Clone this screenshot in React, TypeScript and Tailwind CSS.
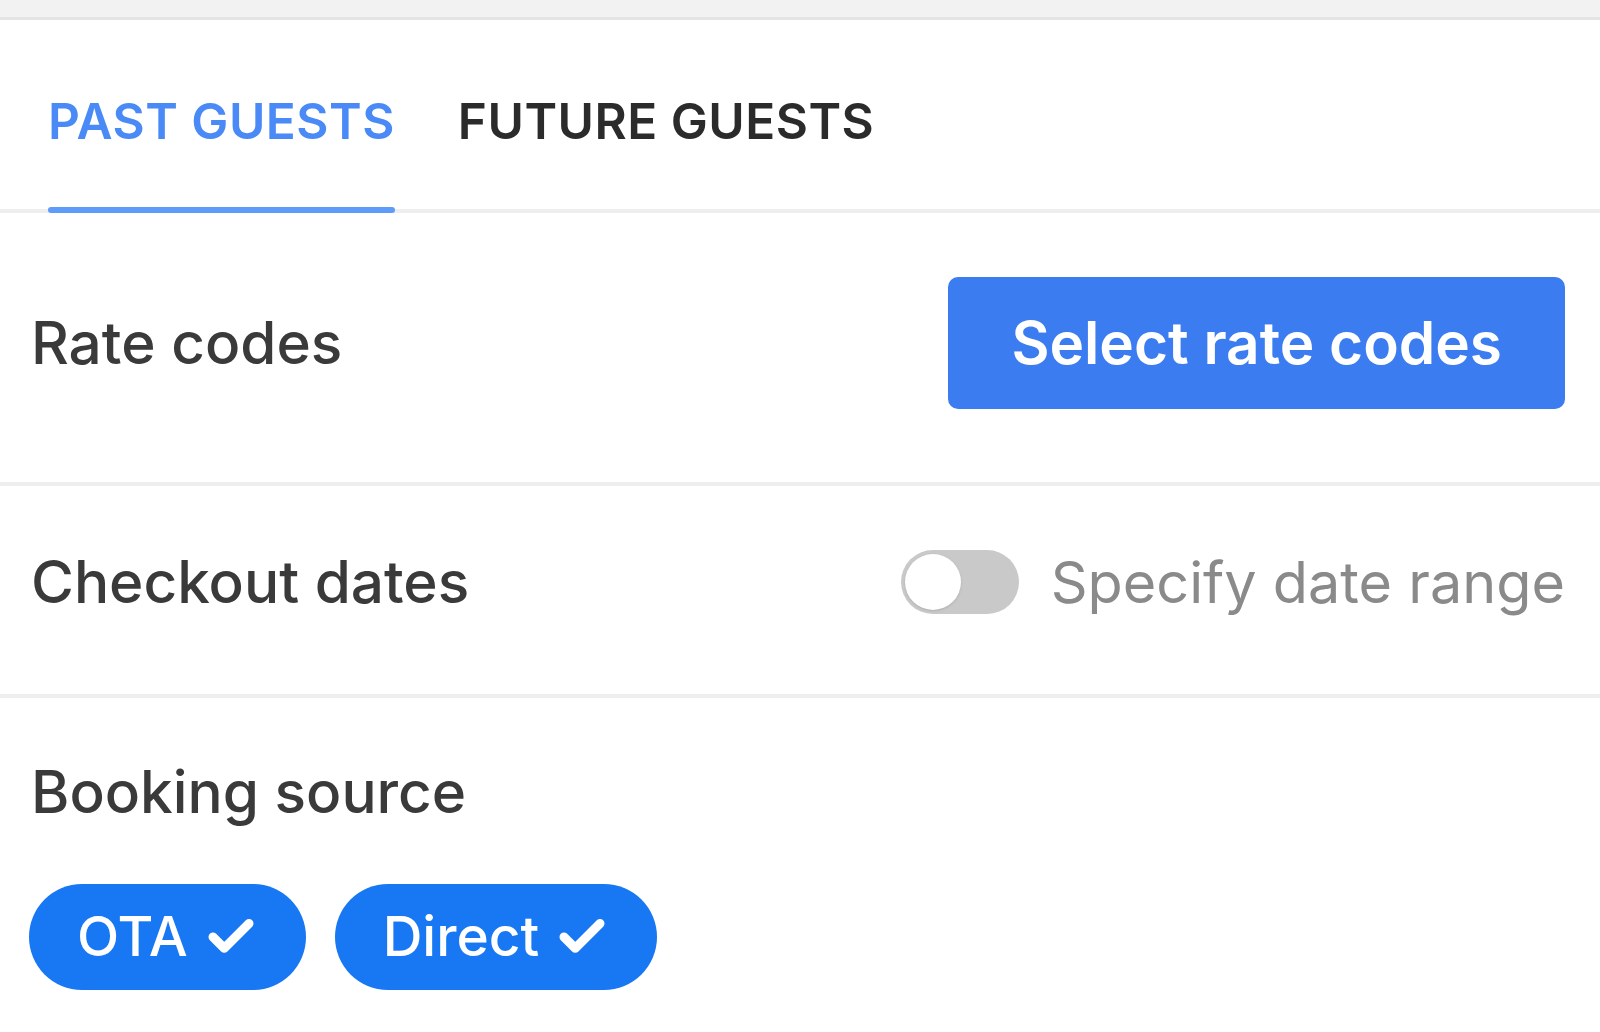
import React, { useState } from "react";
import { Check } from "lucide-react";

const tabs = ["PAST GUESTS", "FUTURE GUESTS"];

const App = () => {
  const [active, setActive] = useState(0);
  const [range, setRange] = useState(false);
  const [sources, setSources] = useState<string[]>(["OTA", "Direct"]);

  const toggleSource = (s: string) => {
    setSources(sources.includes(s) ? sources.filter((x) => x !== s) : [...sources, s]);
  };

  return (
    <div className="w-[1600px] h-[1032px] bg-white overflow-hidden font-['Inter',sans-serif] text-[#333]">
      <div className="h-[20px] bg-[#f2f2f2] border-b-[3px] border-[#e4e4e4]" />

      {/* tabs */}
      <div className="flex items-end gap-[63px] pl-[48px] h-[193px] border-b-[4px] border-[#eeeeee]">
        {tabs.map((t, i) => (
          <button
            key={t}
            onClick={() => setActive(i)}
            className={`relative h-full flex items-center pt-[13px] text-[49.5px] font-semibold tracking-[0.5px] ${
              i === active ? "text-[#4a8af6]" : "text-[#2b2b2b]"
            }`}
          >
            {t}
            {i === active && (
              <span className="absolute left-0 right-0 -bottom-[4px] h-[6px] rounded-full bg-[#5d9cf8]" />
            )}
          </button>
        ))}
      </div>

      {/* rate codes */}
      <div className="flex items-center justify-between h-[273px] pb-[10px] pl-[31px] pr-[35px] border-b-[4px] border-[#eeeeee]">
        <span className="text-[58.5px] font-medium text-[#3a3a3a]">Rate codes</span>
        <button className="h-[132px] px-[63px] rounded-[10px] bg-[#3b7cf0] text-white text-[58.5px] font-semibold">
          Select rate codes
        </button>
      </div>

      {/* checkout dates */}
      <div className="flex items-center justify-between h-[212px] pb-[16px] pl-[31px] pr-[35px] border-b-[4px] border-[#eeeeee]">
        <span className="text-[58.5px] font-medium text-[#3a3a3a]">Checkout dates</span>
        <button onClick={() => setRange(!range)} className="flex items-center gap-[32px]">
          <span
            className={`w-[118px] h-[64px] rounded-full p-[4px] flex ${
              range ? "bg-[#3b7cf0] justify-end" : "bg-[#c9c9c9] justify-start"
            }`}
          >
            <span className="w-[56px] h-[56px] rounded-full bg-white shadow" />
          </span>
          <span className="text-[57.5px] text-[#8a8a8a]">Specify date range</span>
        </button>
      </div>

      {/* booking source */}
      <div className="pt-[65px] pl-[29px] pr-[35px]">
        <div className="pl-[2px] text-[58.5px] font-medium text-[#3a3a3a] leading-none">Booking source</div>
        <div className="flex gap-[29px] mt-[62px]">
          {["OTA", "Direct"].map((s) => (
            <button
              key={s}
              onClick={() => toggleSource(s)}
              className={`h-[106px] px-[48px] rounded-full flex items-center gap-[16px] text-[55px] font-medium ${
                sources.includes(s) ? "bg-[#1877f2] text-white" : "bg-[#e8e8e8] text-[#333]"
              }`}
            >
              {s}
              {sources.includes(s) && <Check size={54} strokeWidth={4} />}
            </button>
          ))}
        </div>
      </div>
    </div>
  );
};

export default App;
